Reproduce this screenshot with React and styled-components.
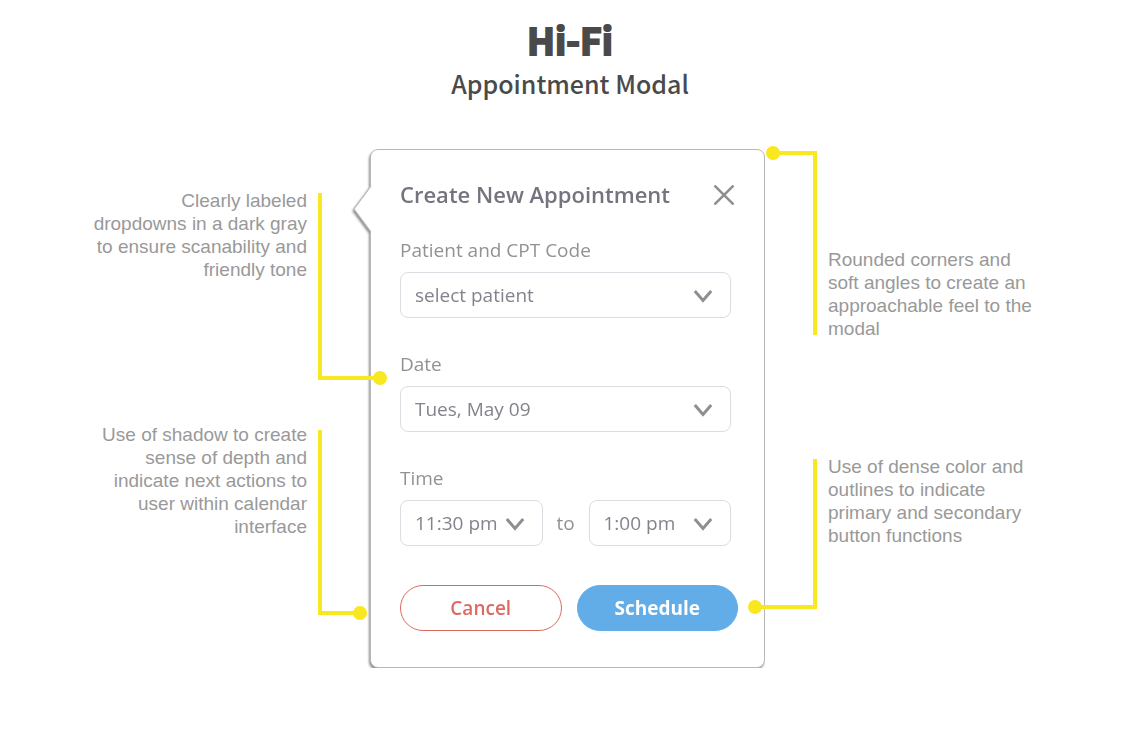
import React from "react";
import styled, { createGlobalStyle } from "styled-components";

const GlobalStyle = createGlobalStyle`
  *, *::before, *::after { box-sizing: border-box; }
  body { margin: 0; background: #fff; font-family: "Open Sans", "Noto Sans", sans-serif; }
`;

const yellow = "#f9e71f";

const Page = styled.div`
  padding: 15px 0 70px;
`;

const PageHeader = styled.header`
  text-align: center;
  color: #4a4a4a;
  font-family: "Noto Sans CJK SC", "Noto Sans", sans-serif;
`;

const Title = styled.h1`
  margin: 0;
  font-size: 37px;
  line-height: 48px;
  font-weight: 700;
  -webkit-text-stroke: 2px #4a4a4a;
`;

const Subtitle = styled.h2`
  margin: 0;
  font-size: 25px;
  line-height: 40px;
  font-weight: 500;
`;

const Board = styled.main`
  display: grid;
  grid-template-columns: minmax(0, 1fr) 395px minmax(0, 1fr);
  align-items: start;
  margin-top: 46px;
  padding-right: 5px;
`;

const NoteColumn = styled.div`
  display: flex;
  flex-direction: column;
  position: relative;
  z-index: 1;
  padding-top: ${(p) => p.$top}px;
  gap: ${(p) => p.$gap}px;
`;

const Note = styled.aside`
  display: flex;
  justify-content: ${(p) => (p.$side === "left" ? "flex-end" : "flex-start")};
  align-items: ${(p) => p.$align || "flex-start"};
  gap: 11px;
`;

const NoteText = styled.p`
  margin: 0;
  width: ${(p) => (p.$side === "left" ? 218 : 212)}px;
  color: #999;
  font-family: "Liberation Sans", Arial, sans-serif;
  font-size: 19px;
  line-height: 23px;
  text-align: ${(p) => (p.$side === "left" ? "right" : "left")};
`;

const Connector = styled.span`
  flex: none;
  position: relative;
  width: ${(p) => p.$width}px;
  height: ${(p) => p.$height}px;
  margin-top: ${(p) => p.$drop}px;
  margin-bottom: ${(p) => (p.$edge === "top" ? 5 : 0)}px;
  margin-${(p) => (p.$side === "left" ? "right" : "left")}: ${(p) => p.$shift}px;
  border: 0 solid ${yellow};
  border-${(p) => (p.$side === "left" ? "left" : "right")}-width: 4px;
  border-${(p) => p.$edge}-width: 4px;

  &::after {
    content: "";
    position: absolute;
    ${(p) => p.$edge}: -9px;
    ${(p) => (p.$side === "left" ? "right" : "left")}: -7px;
    width: 14px;
    height: 14px;
    border-radius: 50%;
    background: ${yellow};
  }
`;

const Modal = styled.form`
  position: relative;
  padding: 26px 26px 36px 29px;
  border: 1px solid #b8b8b8;
  border-radius: 8px;
  background: #fff;
  filter: drop-shadow(-1px 2px 1px rgba(0, 0, 0, 0.45));
  clip-path: inset(-4px 0 0 -24px);
`;

const Pointer = styled.svg`
  position: absolute;
  left: -18px;
  top: 35px;
  width: 20px;
  height: 48px;
`;

const ModalHeader = styled.div`
  display: flex;
  align-items: center;
  justify-content: space-between;
  height: 36px;
  margin-bottom: 24px;
`;

const ModalTitle = styled.h3`
  margin: 0;
  color: #74747f;
  font-size: 22px;
  line-height: 36px;
  font-weight: 600;
`;

const CloseButton = styled.button`
  display: flex;
  padding: 6px 4px 4px;
  border: 0;
  background: none;
  cursor: pointer;
`;

const Fields = styled.div`
  display: flex;
  flex-direction: column;
  gap: 32px;
  padding-right: 7px;
`;

const Field = styled.div`
  display: flex;
  flex-direction: column;
  gap: 8px;
`;

const Label = styled.label`
  color: #929292;
  font-size: 19px;
  line-height: 28px;
`;

const TimeRow = styled.div`
  display: grid;
  grid-template-columns: 1fr 46px 1fr;
  align-items: center;
`;

const To = styled.span`
  color: #929292;
  font-size: 19px;
  text-align: center;
`;

const SelectBox = styled.div`
  position: relative;
`;

const Select = styled.select`
  display: block;
  appearance: none;
  width: 100%;
  height: 46px;
  padding: 0 14px;
  border: 1px solid #dcdce2;
  border-radius: 8px;
  background: #fff;
  color: #83838d;
  font-family: inherit;
  font-size: 19px;
`;

const Chevron = styled.svg`
  position: absolute;
  right: 18px;
  top: 17px;
  width: 20px;
  height: 14px;
  pointer-events: none;
`;

const Actions = styled.div`
  display: grid;
  grid-template-columns: 1fr 1fr;
  gap: 15px;
  margin-top: 39px;
`;

const Button = styled.button`
  height: 46px;
  border: 1px solid ${(p) => (p.$primary ? "#62ade8" : "#dd6a60")};
  border-radius: 23px;
  background: ${(p) => (p.$primary ? "#62ade8" : "#fff")};
  color: ${(p) => (p.$primary ? "#fff" : "#dd6a60")};
  font-family: inherit;
  font-size: 19px;
  font-weight: ${(p) => (p.$primary ? 700 : 600)};
  cursor: pointer;
`;

function Dropdown({ options, ...rest }) {
  return (
    <SelectBox>
      <Select {...rest}>
        {options.map((o) => (
          <option key={o}>{o}</option>
        ))}
      </Select>
      <Chevron viewBox="0 0 20 14" aria-hidden="true">
        <path d="M1.8 2 L10 11.5 L18.2 2" fill="none" stroke="#8f8f8f" strokeWidth="3" />
      </Chevron>
    </SelectBox>
  );
}

export default function App() {
  return (
    <>
      <GlobalStyle />
      <Page>
        <PageHeader>
          <Title>Hi-Fi</Title>
          <Subtitle>Appointment Modal</Subtitle>
        </PageHeader>
        <Board>
          <NoteColumn $top={40} $gap={43}>
            <Note $side="left">
              <NoteText $side="left">
                Clearly labeled dropdowns in a dark gray to ensure scanability and friendly tone
              </NoteText>
              <Connector $side="left" $edge="bottom" $width={62} $height={187} $drop={4} $shift={-10} />
            </Note>
            <Note $side="left">
              <NoteText $side="left">
                Use of shadow to create sense of depth and indicate next actions to user within calendar interface
              </NoteText>
              <Connector $side="left" $edge="bottom" $width={42} $height={185} $drop={7} $shift={10} />
            </Note>
          </NoteColumn>
          <Modal onSubmit={(e) => e.preventDefault()}>
            <Pointer viewBox="0 0 20 48" aria-hidden="true">
              <path d="M18 1 L1 24 L18 47 L20 47 L20 1 Z" fill="#fff" />
              <path d="M18 1 L1 24 L18 47" fill="none" stroke="#b8b8b8" strokeWidth="1.2" />
            </Pointer>
            <ModalHeader>
              <ModalTitle>Create New Appointment</ModalTitle>
              <CloseButton type="button" aria-label="Close">
                <svg width="20" height="20" viewBox="0 0 20 20" aria-hidden="true">
                  <path d="M1.3 1.3 L18.7 18.7 M18.7 1.3 L1.3 18.7" stroke="#8f8f8f" strokeWidth="2.6" strokeLinecap="round" />
                </svg>
              </CloseButton>
            </ModalHeader>
            <Fields>
              <Field>
                <Label htmlFor="patient">Patient and CPT Code</Label>
                <Dropdown id="patient" options={["select patient"]} />
              </Field>
              <Field>
                <Label htmlFor="date">Date</Label>
                <Dropdown id="date" options={["Tues, May 09"]} />
              </Field>
              <Field>
                <Label htmlFor="start">Time</Label>
                <TimeRow>
                  <Dropdown id="start" options={["11:30 pm"]} />
                  <To>to</To>
                  <Dropdown aria-label="End time" options={["1:00 pm"]} />
                </TimeRow>
              </Field>
            </Fields>
            <Actions>
              <Button type="button">Cancel</Button>
              <Button type="submit" $primary>
                Schedule
              </Button>
            </Actions>
          </Modal>
          <NoteColumn $top={0} $gap={115}>
            <Note $side="right" $align="flex-end">
              <Connector $side="right" $edge="top" $width={44} $height={184} $drop={2} $shift={8} />
              <NoteText $side="right">
                Rounded corners and soft angles to create an approachable feel to the modal
              </NoteText>
            </Note>
            <Note $side="right">
              <Connector $side="right" $edge="bottom" $width={62} $height={150} $drop={4} $shift={-10} />
              <NoteText $side="right">
                Use of dense color and outlines to indicate primary and secondary button functions
              </NoteText>
            </Note>
          </NoteColumn>
        </Board>
      </Page>
    </>
  );
}
